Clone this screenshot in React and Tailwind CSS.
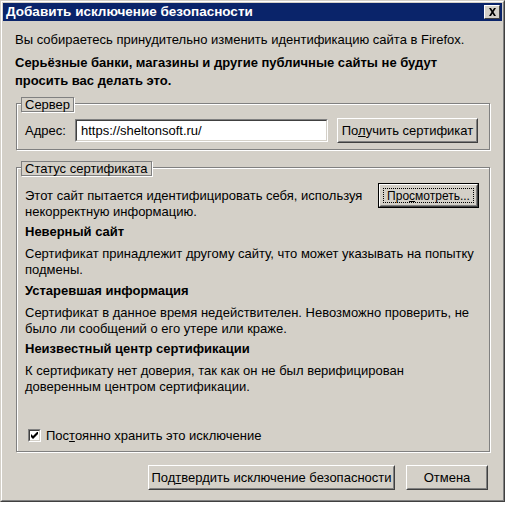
import React from "react";

const F = "font-['Liberation_Sans',Arial,sans-serif]";

function Btn({ children, className = "", def = false }) {
  return (
    <div
      className={`flex items-center justify-center bg-[#d4d0c8] text-black ${
        def ? "border border-black" : ""
      } ${className}`}
    >
      <div className="flex h-full w-full items-center justify-center border border-t-white border-l-white border-r-[#404040] border-b-[#404040]">
        <div className="flex h-full w-full items-center justify-center border border-t-[#d4d0c8] border-l-[#d4d0c8] border-r-[#808080] border-b-[#808080]">
          {def ? (
            <div className="flex h-[calc(100%-4px)] w-[calc(100%-4px)] items-center justify-center border border-dotted border-black">
              {children}
            </div>
          ) : (
            children
          )}
        </div>
      </div>
    </div>
  );
}

function Group({ title, children, className = "" }) {
  return (
    <div className={`ml-[13px] flex w-[474px] flex-col ${className}`}>
      <div className="relative z-10 ml-[5px] -mb-[9px] flex h-[15px] w-fit items-center border border-[#808080] bg-[#d4d0c8] px-[3px] shadow-[1px_1px_0_#fff] text-[13px] leading-none">
        {title}
      </div>
      <div className="border border-[#808080] shadow-[inset_1px_1px_0_#fff,1px_1px_0_#fff]">
        {children}
      </div>
    </div>
  );
}

export default function App() {
  return (
    <div className={`h-[505px] w-[507px] bg-white ${F}`}>
      <div className="flex h-[502px] w-[505px] flex-col border border-t-[#d4d0c8] border-l-[#d4d0c8] border-r-[#404040] border-b-[#404040] bg-[#d4d0c8]">
        <div className="flex h-full w-full flex-col border border-t-white border-l-white border-r-[#808080] border-b-[#808080] px-px pt-px">
          {/* title bar */}
          <div className="flex h-[18px] items-center justify-between bg-[#0a246a] pl-[3px] pr-[2px]">
            <span className="text-[13.5px] font-bold leading-none text-white">
              Добавить исключение безопасности
            </span>
            <div className="flex h-[14px] w-[16px] items-center justify-center border border-t-white border-l-white border-r-[#404040] border-b-[#404040] bg-[#d4d0c8]">
              <svg width="9" height="8" viewBox="0 0 9 8">
                <path d="M1 0h2l1.5 2.5L6 0h2L5.5 4L8 8H6L4.5 5.5L3 8H1l2.5-4z" fill="#000" />
              </svg>
            </div>
          </div>

          <div className="flex flex-col text-[13px] text-black">
            <p className="ml-[12px] mt-[11px] leading-[16px]">
              Вы собираетесь принудительно изменить идентификацию сайта в Firefox.
            </p>
            <p className="ml-[12px] mt-[6px] w-[460px] font-bold leading-[18px]">
              Серьёзные банки, магазины и другие публичные сайты не будут просить вас делать это.
            </p>

            <Group title="Сервер" className="mt-[7px]">
              <div className="flex h-[45px] items-center pl-[8px] pr-[10px] pt-[8px]">
                <span className="w-[50px]">Адрес:</span>
                <div className="flex h-[23px] w-[253px] items-center border border-t-[#808080] border-l-[#808080] border-r-white border-b-white">
                  <div className="flex h-full w-full items-center border border-t-[#404040] border-l-[#404040] border-r-[#d4d0c8] border-b-[#d4d0c8] bg-white pl-[4px]">
                    https://sheltonsoft.ru/
                  </div>
                </div>
                <Btn className="ml-[9px] h-[25px] w-[141px] text-[13px]">
                  <span>
                    По<u>л</u>учить сертификат
                  </span>
                </Btn>
              </div>
            </Group>

            <Group title="Статус сертификата" className="mt-[11px]">
              <div className="flex h-[283px] flex-col pl-[8px] pr-[10px]">
                <div className="mt-[20px] flex items-start justify-between">
                  <p className="leading-[16px]">
                    Этот сайт пытается идентифицировать себя, используя
                    <br />
                    некорректную информацию.
                  </p>
                  <Btn def className="-mt-[5px] h-[25px] w-[101px] text-[12px]">
                    <span>
                      Про<u>с</u>мотреть...
                    </span>
                  </Btn>
                </div>
                <p className="mt-[4px] font-bold leading-[16px]">Неверный сайт</p>
                <p className="mt-[6px] leading-[16px]">
                  Сертификат принадлежит другому сайту, что может указывать на попытку
                  <br />
                  подмены.
                </p>
                <p className="mt-[5px] font-bold leading-[16px]">Устаревшая информация</p>
                <p className="mt-[6px] leading-[16px]">
                  Сертификат в данное время недействителен. Невозможно проверить, не
                  <br />
                  было ли сообщений о его утере или краже.
                </p>
                <p className="mt-[4px] font-bold leading-[16px]">Неизвестный центр сертификации</p>
                <p className="mt-[6px] leading-[16px]">
                  К сертификату нет доверия, так как он не был верифицирован
                  <br />
                  доверенным центром сертификации.
                </p>
                <div className="mt-auto mb-[6px] ml-[3px] flex items-center">
                  <div className="flex h-[13px] w-[13px] items-center justify-center border border-t-[#808080] border-l-[#808080] border-r-white border-b-white">
                    <div className="flex h-full w-full items-center justify-center border border-t-[#404040] border-l-[#404040] border-r-[#d4d0c8] border-b-[#d4d0c8] bg-white">
                      <svg width="7" height="7" viewBox="0 0 7 7">
                        <path d="M0 2v3l2 2l5-5V-1L2 4z" fill="#000" />
                      </svg>
                    </div>
                  </div>
                  <span className="ml-[5px]">
                    Пос<u>т</u>оянно хранить это исключение
                  </span>
                </div>
              </div>
            </Group>

            <div className="mt-[13px] flex justify-end pr-[14px]">
              <Btn className="h-[25px] w-[247px] text-[13px]">
                <span>
                  Под<u>т</u>вердить исключение безопасности
                </span>
              </Btn>
              <Btn className="ml-[11px] h-[25px] w-[82px] text-[13px]">Отмена</Btn>
            </div>
          </div>
        </div>
      </div>
    </div>
  );
}
